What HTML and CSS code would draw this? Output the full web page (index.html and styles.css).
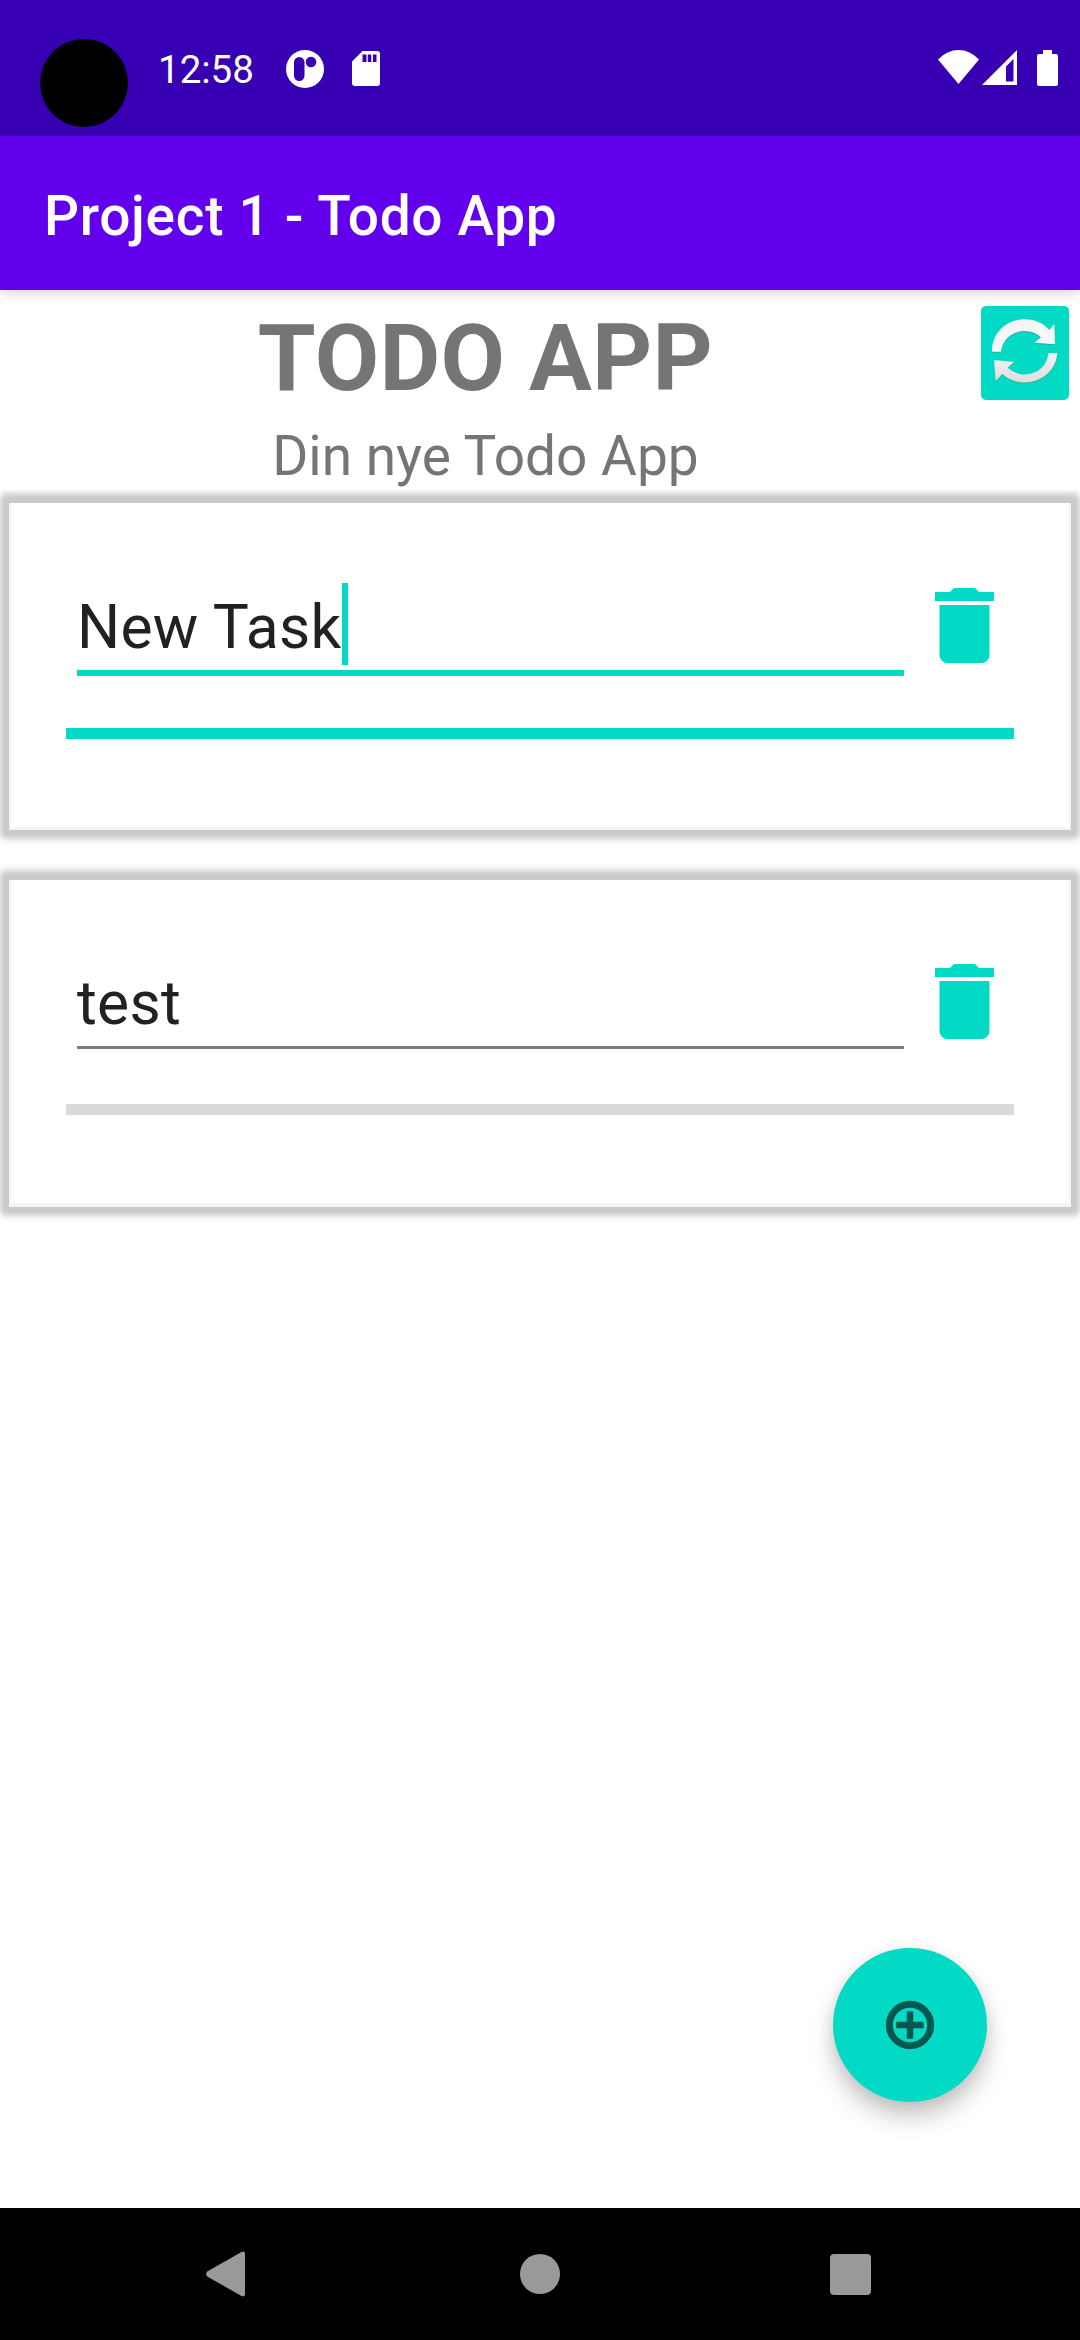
FILE: index.html
```html
<!DOCTYPE html>
<html lang="da">
<head>
<meta charset="utf-8">
<title>Project 1 - Todo App</title>
<link rel="stylesheet" href="styles.css">
</head>
<body>
<div class="screen">
  <div class="status-bar">
    <span class="camera"></span>
    <span class="clock">12:58</span>
    <svg class="status-app" viewBox="0 0 38 38" width="38" height="38"><circle cx="19" cy="19" r="19" fill="#fff"/><rect x="8" y="7" width="10.5" height="24" rx="5.2" fill="#3700b3"/><circle cx="25" cy="12" r="5.3" fill="#3700b3"/></svg>
    <svg class="status-sd" viewBox="0 0 28 35" width="28" height="35"><path fill="#fff" d="M10.500 0H25a3 3 0 0 1 3 3V32a3 3 0 0 1-3 3H3a3 3 0 0 1-3-3V10.500z"/><path fill="#3700b3" d="M10.500 3.500h4v7.500h-4zM15.800 3.500h3.500v7.500h-3.500zM21 3.500h3.500v7.500h-3.500z"/></svg>
    <div class="status-right">
      <svg class="wifi" viewBox="0 0 41 34" width="41" height="34"><path fill="#fff" d="M0 9.500Q9 0 20.500 0T41 9.500L20.500 34z"/></svg>
      <svg class="signal" viewBox="0 0 35 35" width="35" height="35"><path fill="#fff" fill-rule="evenodd" d="M35 0V35H0zM31.500 9L24 16.500V31.500h7.500z"/></svg>
      <svg class="battery" viewBox="0 0 21 36" width="21" height="36"><path fill="#fff" d="M6 0h9v4h4a2 2 0 0 1 2 2V34a2 2 0 0 1-2 2H2a2 2 0 0 1-2-2V6a2 2 0 0 1 2-2h4z"/></svg>
    </div>
  </div>
  <header class="app-bar">Project 1 - Todo App</header>
  <div class="heading">
    <div class="heading-text">
      <h1 class="title">TODO APP</h1>
      <p class="subtitle">Din nye Todo App</p>
    </div>
    <button class="refresh" aria-label="Opdater">
      <svg viewBox="0 0 264 282" width="88" height="94">
        <defs><linearGradient id="silver" gradientUnits="userSpaceOnUse" x1="0" y1="42" x2="0" y2="236"><stop offset="0" stop-color="#f4f4f4"/><stop offset=".4" stop-color="#fafafa"/><stop offset="1" stop-color="#dcdcdc"/></linearGradient></defs>
        <g fill="#4b8f88" opacity=".6" transform="translate(0 3)"><path d="M33 137A98 94 0 0 1 205 72L220 54L222 115L161 110L180 94A71 67 0 0 0 60 137z"/><path d="M229 141A98 94 0 0 1 64 204L44 225L39 162L99 168L80 185A71 67 0 0 0 202 141z"/></g>
        <g fill="url(#silver)"><path d="M33 137A98 94 0 0 1 205 72L220 54L222 115L161 110L180 94A71 67 0 0 0 60 137z"/><path d="M229 141A98 94 0 0 1 64 204L44 225L39 162L99 168L80 185A71 67 0 0 0 202 141z"/></g>
      </svg>
    </button>
  </div>
  <main class="task-list">
    <section class="card">
      <div class="task-row">
        <div class="field field-focused"><span>New Task</span><i class="caret"></i></div>
        <svg class="trash" viewBox="0 0 59 75" width="59" height="75"><path fill="#03dac6" d="M0 4H15L19 0H40L44 4H59V13H0zM4.500 17H54.500V67a8 8 0 0 1-8 8H12.500a8 8 0 0 1-8-8z"/></svg>
      </div>
      <div class="progress progress-full"></div>
    </section>
    <section class="card card-next">
      <div class="task-row">
        <div class="field"><span>test</span></div>
        <svg class="trash" viewBox="0 0 59 75" width="59" height="75"><path fill="#03dac6" d="M0 4H15L19 0H40L44 4H59V13H0zM4.500 17H54.500V67a8 8 0 0 1-8 8H12.500a8 8 0 0 1-8-8z"/></svg>
      </div>
      <div class="progress"></div>
    </section>
  </main>
  <button class="fab" aria-label="Tilføj">
    <svg viewBox="0 0 50 50" width="50" height="50"><circle cx="25" cy="25" r="20.700" fill="none" stroke="#02574f" stroke-width="7"/><path d="M25 14.500V35.500M14.500 25H35.500" stroke="#02574f" stroke-width="6.500" stroke-linecap="square"/></svg>
  </button>
  <nav class="nav-bar">
    <svg viewBox="0 0 40 46" width="40" height="46"><path fill="#999" d="M1.200 20.500L35.500 1Q39 -.5 39 3V43Q39 46.500 35.500 45L1.200 25.500Q-1 23 1.200 20.500z"/></svg>
    <svg class="nav-home" viewBox="0 0 40 40" width="40" height="40"><circle cx="20" cy="20" r="20" fill="#999"/></svg>
    <svg viewBox="0 0 41 41" width="41" height="41"><rect width="41" height="41" rx="4" fill="#999"/></svg>
  </nav>
</div>
</body>
</html>
```
FILE: styles.css
```css
* { box-sizing: border-box; }
body { margin: 0; background: #fff; font-family: Roboto, "Noto Sans", sans-serif; }
button { border: 0; padding: 0; }
svg { display: block; flex: none; }

.screen {
  position: relative;
  display: flex;
  flex-direction: column;
  width: 1080px;
  height: 2340px;
  overflow: hidden;
}

/* System status bar */
.status-bar {
  display: flex;
  align-items: flex-start;
  flex: none;
  height: 136px;
  padding: 50px 22px 0 158px;
  background: #3700b3;
  color: #fff;
}
.camera {
  position: absolute;
  top: 39px;
  left: 40px;
  width: 88px;
  height: 88px;
  border-radius: 50%;
  background: #000;
}
.clock { width: 127px; margin-top: -3px; font-size: 38.5px; line-height: 45px; }
.status-app { margin: -.5px 28px 0 .5px; }
.status-sd { margin-top: 1px; }
.status-right { display: flex; margin-left: auto; }
.signal { margin-left: 3px; }
.battery { margin-left: 20px; }

.app-bar {
  position: relative;
  z-index: 1;
  flex: none;
  height: 154px;
  padding-left: 44px;
  background: #6200ee;
  box-shadow: 0 3px 12px rgba(0, 0, 0, .17);
  color: #fff;
  font-size: 55px;
  font-weight: 500;
  letter-spacing: .0125em;
  line-height: 160px;
}

/* Heading with the refresh button */
.heading { display: flex; flex: none; height: 200px; }
.heading-text {
  width: 971px;
  padding-top: 13px;
  color: #757575;
  text-align: center;
}
.title { margin: 0; font-size: 93.5px; letter-spacing: .3px; line-height: 110px; }
.subtitle { margin: 11px 0 0; font-size: 55px; line-height: 64px; }
.refresh {
  width: 88px;
  height: 94px;
  margin: 16px 0 0 10px;
  border-radius: 5px;
  background: #03dac6;
}

/* Task cards */
.task-list { flex: 1; padding: 13px 9px 0; overflow: hidden; }
.card {
  height: 327px;
  padding: 80px 55px 0;
  border: solid #f5f5f5;
  border-width: 0 2px 3px;
  background: #fff;
  box-shadow: 0 0 5px 7px #c9c9c9, 0 -3px 7px 7px rgba(190, 190, 190, .6), 0 3px 8px 7px rgba(200, 200, 200, .4);
}
.card-next { margin-top: 50px; padding-top: 79px; border-bottom-width: 4px; }
.task-row { display: flex; justify-content: space-between; height: 145px; padding: 0 20px 0 11px; }
.field {
  display: flex;
  width: 827px;
  height: 90px;
  border-bottom: 3px solid #7d7d7d;
  color: #212121;
  font-size: 60.5px;
  letter-spacing: .3px;
  line-height: 87px;
}
.field span { padding-top: 1px; }
.field-focused { height: 93px; border-bottom: 6px solid #03dac6; }
.caret { width: 6px; height: 82px; background: #03dac6; }
.trash { margin-top: 5px; }
.progress { height: 11px; background: #dadada; }
.progress-full { background: #03dac6; }

.fab {
  position: absolute;
  top: 1948px;
  left: 833px;
  display: flex;
  align-items: center;
  justify-content: center;
  width: 154px;
  height: 154px;
  border-radius: 50%;
  background: #03dac6;
  box-shadow: 0 15px 24px rgba(0, 0, 0, .22), 0 2px 14px rgba(0, 0, 0, .08);
}

.nav-bar {
  display: flex;
  align-items: center;
  justify-content: space-between;
  flex: none;
  height: 132px;
  padding: 0 209px 0 206px;
  background: #000;
}
.nav-home { margin-left: 4px; }
```
